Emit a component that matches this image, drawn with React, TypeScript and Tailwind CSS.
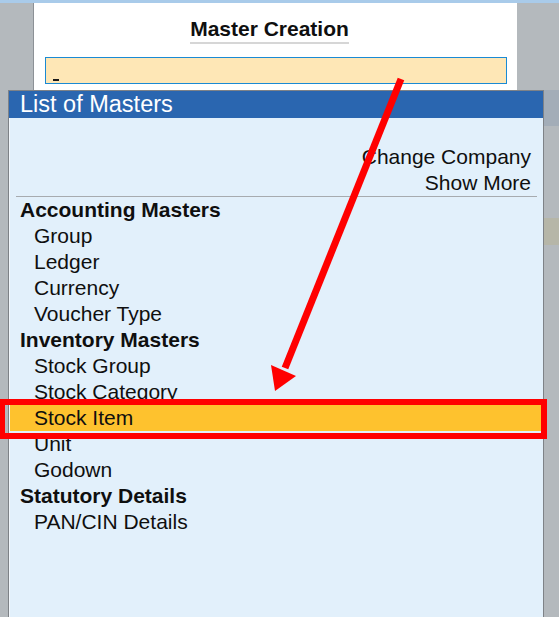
const ROWS: { label: string; heading?: boolean; active?: boolean }[] = [
  { label: 'Accounting Masters', heading: true },
  { label: 'Group' },
  { label: 'Ledger' },
  { label: 'Currency' },
  { label: 'Voucher Type' },
  { label: 'Inventory Masters', heading: true },
  { label: 'Stock Group' },
  { label: 'Stock Category' },
  { label: 'Stock Item', active: true },
  { label: 'Unit' },
  { label: 'Godown' },
  { label: 'Statutory Details', heading: true },
  { label: 'PAN/CIN Details' },
];

export default function App() {
  return (
    <div className="relative h-[617px] w-[559px] overflow-hidden bg-[#b4b9bd] font-['Liberation_Sans',Arial,sans-serif] text-[#0f0f0f]">
      <div className="h-[3px] bg-[#a9cbea]" />

      {/* master creation window behind */}
      <div className="ml-[33px] h-[87px] w-[484px] border-l border-[#8c9196] bg-white">
        <div className="flex justify-center pr-[12px] pt-[14px]">
          <span className="border-b-2 border-[#d6d6d6] pb-[1px] text-[21px] font-bold leading-[24px]">
            Master Creation
          </span>
        </div>
        <div className="ml-[11px] mt-[13px] flex h-[27px] w-[462px] items-end border border-[#1a8ad4] bg-[#fee7b6] pb-[2px] pl-[7px]">
          <span className="h-[2px] w-[6px] bg-[#1a1a1a]" />
        </div>
      </div>

      <div className="flex">
        {/* list of masters */}
        <div className="ml-[8px] h-[530px] w-[536px] border border-[#7e8287] bg-[#e2f0fb]">
          <div className="h-[27px] bg-[#2a66b0] pl-[11px] text-[23.5px] leading-[27px] text-white">
            List of Masters
          </div>
          <div className="h-full border-l border-[#f3f8fd] text-[21px] leading-[26px]">
            <div className="h-[26px]" />
            <div className="pr-[12px] text-right">Change Company</div>
            <div className="pr-[12px] text-right">Show More</div>
            <div className="ml-[6px] mr-[6px] h-px bg-[#a7abaf]" />
            {ROWS.map((r) => (
              <div
                key={r.label}
                className={
                  (r.heading ? 'pl-[10px] font-bold ' : 'pl-[24px] ') +
                  (r.active ? 'bg-[#fec22e] ' : '') +
                  'h-[26px] whitespace-nowrap'
                }
              >
                {r.label}
              </div>
            ))}
          </div>
        </div>

        <div className="flex-1">
          <div className="h-[36px] bg-[#a3adb8]" />
          <div className="mt-[92px] h-[27px] bg-[#b6b6a8]" />
        </div>
      </div>

      {/* annotation: red box + arrow */}
      <div className="absolute left-0 top-[399px] h-[40px] w-[547px] border-[6px] border-l-[5px] border-[#ff0000]" />
      <svg className="pointer-events-none absolute inset-0" width="559" height="617" viewBox="0 0 559 617">
        <line x1="401" y1="79" x2="285" y2="368" stroke="#ff0000" strokeWidth="7" />
        <polygon points="275,391 271,365 296,376" fill="#ff0000" />
      </svg>
    </div>
  );
}
